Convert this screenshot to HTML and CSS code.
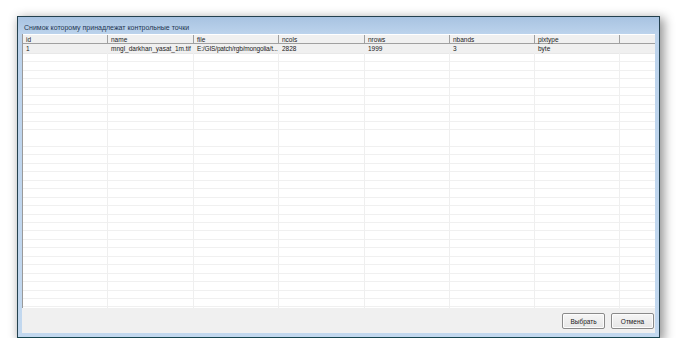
FILE: index.html
```html
<!DOCTYPE html>
<html lang="ru">
<head>
    <meta charset="UTF-8">
    <title>Снимок которому принадлежат контрольные точки</title>
    <link rel="stylesheet" href="styles.css">
</head>
<body>
    <div class="window">
        <div class="title-bar">Снимок которому принадлежат контрольные точки</div>
        <div class="client">
            <div class="grid">
                <div class="row header">
                    <div class="cell">id</div>
                    <div class="cell">name</div>
                    <div class="cell">file</div>
                    <div class="cell">ncols</div>
                    <div class="cell">nrows</div>
                    <div class="cell">nbands</div>
                    <div class="cell">pixtype</div>
                    <div class="cell last"></div>
                </div>
                <div class="row data">
                    <div class="cell">1</div>
                    <div class="cell">mngl_darkhan_yasat_1m.tif</div>
                    <div class="cell narrow">E:/GIS/patch/rgb/mongolia/t...</div>
                    <div class="cell">2828</div>
                    <div class="cell">1999</div>
                    <div class="cell">3</div>
                    <div class="cell">byte</div>
                    <div class="cell last"></div>
                </div>
                <div class="empty-rows"></div>
            </div>
            <div class="footer">
                <button class="btn">Выбрать</button>
                <button class="btn">Отмена</button>
            </div>
        </div>
    </div>
</body>
</html>
```

FILE: styles.css
```css
* {
    margin: 0;
    padding: 0;
    box-sizing: border-box;
}

body {
    background: #ffffff;
    font-family: 'Liberation Sans', Arial, sans-serif;
    font-size: 6.5px;
    color: #1a1a1a;
}

.window {
    margin: 16px 0 0 17px;
    width: 643px;
    height: 322px;
    border: 1px solid #24414f;
    border-bottom-color: #17454f;
    background: linear-gradient(180deg, #a8c3e1 0px, #bcd3ec 17px, #c2d8ef 100%);
    padding: 0 4px 4px 4px;
    display: flex;
    flex-direction: column;
    box-shadow: 3px 3px 10px 1px rgba(0, 0, 0, 0.42);
}

.title-bar {
    height: 17px;
    line-height: 22px;
    padding-left: 2px;
    font-size: 7px;
    color: #1e3550;
}

.client {
    flex: 1;
    background: #f0f0f0;
    display: flex;
    flex-direction: column;
}

.grid {
    height: 274px;
    background: #ffffff;
    border-left: 1px solid #9a9a9a;
    display: flex;
    flex-direction: column;
    overflow: hidden;
}

.row {
    display: grid;
    grid-template-columns: 85px 86px 85px 86px 85px 85px 85px 1fr;
    flex-shrink: 0;
}

.row .cell {
    border-right: 1px solid #efefef;
    padding-left: 3px;
    white-space: nowrap;
}

.row .cell.narrow {
    letter-spacing: -0.15px;
}

.row.header {
    height: 9px;
    margin-top: 1px;
    background: #f0f0f0;
    border-bottom: 1px solid #a0a0a0;
}

.row.header .cell {
    border-right: 1px solid #a0a0a0;
    line-height: 9.5px;
}

.row.data {
    background: #f0f0f0;
    height: 10px;
    border-bottom: 1px solid #e8e8e8;
}

.row.data .cell {
    line-height: 10.5px;
}

.row .cell.last {
    border-right: none;
}

.empty-rows {
    flex: 1;
    background-image:
        linear-gradient(90deg, transparent 84px, #efefef 84px, #efefef 85px, transparent 85px, transparent 170px, #efefef 170px, #efefef 171px, transparent 171px, transparent 255px, #efefef 255px, #efefef 256px, transparent 256px, transparent 341px, #efefef 341px, #efefef 342px, transparent 342px, transparent 426px, #efefef 426px, #efefef 427px, transparent 427px, transparent 511px, #efefef 511px, #efefef 512px, transparent 512px, transparent 596px, #efefef 596px, #efefef 597px, transparent 597px),
        repeating-linear-gradient(180deg, transparent 0, transparent 7.45px, #f0f0f0 7.45px, #f0f0f0 8.45px);
}

.footer {
    flex: 1;
    display: flex;
    justify-content: flex-end;
    align-items: center;
    gap: 6px;
    padding: 1px 1px 0 0;
}

.btn {
    width: 43px;
    height: 16px;
    font-family: 'Liberation Sans', Arial, sans-serif;
    font-size: 6.5px;
    color: #1a1a1a;
    background: linear-gradient(180deg, #f6f6f6 0%, #e6e6e6 100%);
    border: 1px solid #8a8a8a;
    border-radius: 2px;
    box-shadow: inset 0 0 0 1px #fcfcfc;
}
```
